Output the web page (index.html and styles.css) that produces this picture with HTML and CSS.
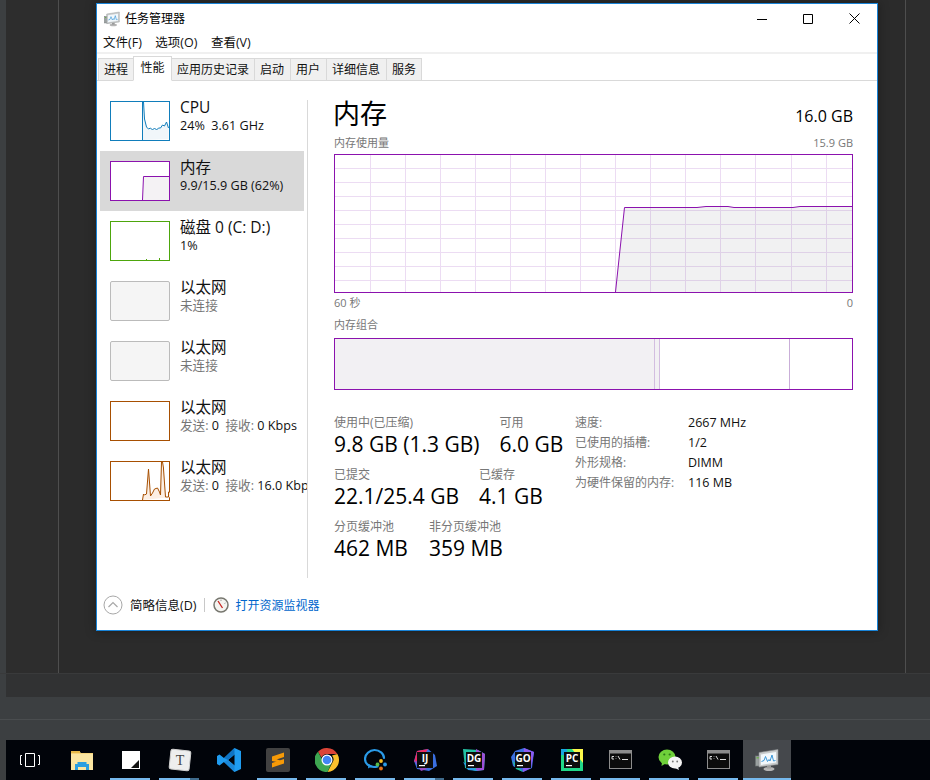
FILE: index.html
```html
<!DOCTYPE html>
<html lang="zh-CN">
<head>
<meta charset="utf-8">
<title>任务管理器</title>
<link rel="stylesheet" href="styles.css">
</head>
<body>
<svg class="defs" width="0" height="0">
  <symbol id="tm" viewBox="0 0 24 24">
    <rect x="0.5" y="8" width="6" height="10" fill="#9aa0a0" stroke="#6f7575" stroke-width=".6"/>
    <rect x="1.5" y="9" width="2.5" height="1.5" fill="#6fb04e"/>
    <ellipse cx="14" cy="21" rx="5.5" ry="2" fill="#b5b5b5"/>
    <rect x="12" y="17" width="4" height="3.5" fill="#9c9c9c"/>
    <path d="M4 4.5 23 1.5v15L4 19z" fill="#c9cccd" stroke="#8b8f90" stroke-width=".6"/>
    <path d="M6 6.5 21 4v10.5L6 17z" fill="#f2f8fc"/>
    <path d="M6.5 13.5 9 12.5l1.5-4 2 5 1.500-2 1 1.500 2-6 1.500 6 2-.5" fill="none" stroke="#3b97d8" stroke-width="1"/>
  </symbol>
  <symbol id="cmd" viewBox="0 0 24 24">
    <rect x=".5" y="2.500" width="22" height="18" fill="#0c0c0c" stroke="#8c8c8c"/>
    <rect x="1" y="3" width="21" height="2.500" fill="#8c8c8c"/>
    <path d="M3 8.500h2M3 11h2M3 8.500v2.500M7 8.500v.5M7 10.500v.5M9 8l2 3.500M13 11.500h6" fill="none" stroke="#dcdcdc" stroke-width="1"/>
  </symbol>
</svg>
<div class="desktop">
  <div class="editor">
    <div class="edge"></div>
    <div class="gutter"></div>
    <div class="code"></div>
    <div class="rightcol"></div>
  </div>
  <div class="status"><div class="edge"></div></div>
  <div class="toolstrip"></div>
  <div class="taskbar">
    <div class="edge"></div>
    <div class="task task-first">
      <svg width="22" height="16" viewBox="0 0 22 16"><path d="M6.500 1.500h9v13h-9zM3 3.500H1.500v9H3M19 3.500h1.500v9H19" fill="none" stroke="#fff" stroke-width="1"/></svg>
    </div>
    <div class="task">
      <svg width="22" height="20" viewBox="0 0 22 20"><path d="M0 1h8l2 2h12v17H0z" fill="#f6d57c"/><path d="M0 4h22v16H0z" fill="#fbe6a2"/><path d="M0 1h9v2H0z" fill="#e7b948"/><path d="M4 20v-6h2.500v-2h9v2H18v6h-3v-3H7v3z" fill="#2b9fe0"/></svg>
    </div>
    <div class="task on">
      <svg width="18" height="18" viewBox="0 0 18 18"><path d="M0 0h18v18H0z" fill="#fff"/><path d="M17 9v8H9z" fill="#111"/></svg>
    </div>
    <div class="task on split">
      <svg width="24" height="24" viewBox="0 0 24 24"><rect x="2" y="2" width="20" height="20" rx="2" transform="rotate(6 12 12)" fill="#eeeeee" stroke="#cfcfcf"/><text x="12" y="17" text-anchor="middle" class="tt">T</text></svg>
    </div>
    <div class="task">
      <svg width="24" height="24" viewBox="0 0 24 24"><path d="M17.500 0 24 3v18l-6.500 3L7 14l-4.500 3.500L0 16V8l2.500-1.500L7 10zM17.500 6.500 11 12l6.500 5.500z" fill="#1f9cf0"/><path d="M17.500 0v6.500L11 12 7 10z" fill="#0f74c4"/><path d="M17.500 24v-6.500L11 12l-4 2z" fill="#1a87d8"/></svg>
    </div>
    <div class="task on">
      <svg width="24" height="24" viewBox="0 0 24 24"><rect width="24" height="24" rx="2" fill="#414141"/><path d="M6 8.500 18 4.500V9L6 13zM6 10 18 13.500v2L6 13zM6 15 18 11v4.500L6 19.500z" fill="#f79a07"/></svg>
    </div>
    <div class="task on">
      <svg width="24" height="24" viewBox="0 0 24 24"><path d="M12 0a12 12 0 0 1 10.400 6H12a6 6 0 0 0-5.500 3.500L3 3.700A12 12 0 0 1 12 0z" fill="#db4437"/><path d="M22.400 6A12 12 0 0 1 12.500 24l4.700-9A6 6 0 0 0 17 7.500z" fill="#fbc02d"/><path d="M12.500 24A12 12 0 0 1 3 3.700l4.800 9a6 6 0 0 0 8.700 2.500z" fill="#3da651"/><circle cx="12" cy="12" r="5.500" fill="#fff"/><circle cx="12" cy="12" r="4.300" fill="#4285f4"/></svg>
    </div>
    <div class="task on">
      <svg width="24" height="24" viewBox="0 0 24 24"><path d="M13.500 18.500c-1.100.4-2.300.5-3.500.5-5-.3-9-3.500-9-8S5.500 2 10.500 2s9.500 3.500 9.500 8" fill="none" stroke="#2a9be8" stroke-width="2.200" stroke-linecap="round"/><path d="M4.500 16l-.5 4.500 4.500-2.500z" fill="#2a9be8"/><circle cx="17" cy="13" r="1.900" fill="#f7c325"/><circle cx="21" cy="16.500" r="1.900" fill="#2a9be8"/><circle cx="17" cy="20.500" r="1.900" fill="#e8731a"/><circle cx="13.500" cy="16.500" r="1.900" fill="#58b947"/></svg>
    </div>
    <div class="task on split">
      <svg width="24" height="24" viewBox="0 0 24 24"><path d="M4 3 15 1l7 6 2 11-8 5-12-2-3-8z" fill="#3a6fe0"/><path d="M4 3 15 1 8 12 1 14z" fill="#ed2a66"/><path d="M1 12l7 11 6-2-9-7z" fill="#9a4bc0"/><rect x="4" y="4" width="16" height="16" fill="#0c0c0c"/><text x="12" y="14" text-anchor="middle" class="jb">IJ</text><path d="M6 17h6v1.200H6z" fill="#fff"/></svg>
    </div>
    <div class="task on">
      <svg width="24" height="24" viewBox="0 0 24 24"><path d="M1 1l15 1 7 4-1 16-8 1-11-3z" fill="#24c2a4"/><path d="M14 1l9 5-1 16-8 1z" fill="#9d4fd8"/><path d="M1 14l5 8 10 1-9-6z" fill="#2c9ae6"/><rect x="4" y="4" width="16" height="16" fill="#0c0c0c"/><text x="12" y="14" text-anchor="middle" class="jb">DG</text><path d="M6 17h6v1.200H6z" fill="#fff"/></svg>
    </div>
    <div class="task on">
      <svg width="24" height="24" viewBox="0 0 24 24"><path d="M4 3l9-3 10 4-2 16-9 4-10-6-2-9z" fill="#3a6fe0"/><path d="M13 0l10 4-3 16-8 4z" fill="#8d5af0"/><path d="M1 12l4 9 7 3z" fill="#1fc29a"/><rect x="4" y="4" width="16" height="16" fill="#0c0c0c"/><text x="12" y="14" text-anchor="middle" class="jb">GO</text><path d="M6 17h6v1.200H6z" fill="#fff"/></svg>
    </div>
    <div class="task on">
      <svg width="24" height="24" viewBox="0 0 24 24"><path d="M1 1h22v22H1z" fill="#21d789"/><path d="M12 1h11v14z" fill="#fcf84a"/><path d="M1 1h6v6H1z" fill="#18a8e0"/><rect x="4" y="4" width="16" height="16" fill="#0c0c0c"/><text x="12" y="14" text-anchor="middle" class="jb">PC</text><path d="M6 17h6v1.200H6z" fill="#fff"/></svg>
    </div>
    <div class="task on"><svg width="24" height="24"><use href="#cmd"/></svg></div>
    <div class="task on">
      <svg width="24" height="22" viewBox="0 0 24 22"><ellipse cx="9" cy="8" rx="8.500" ry="7.500" fill="#6fd03a"/><path d="M4 13l-.5 4 4-2.500z" fill="#6fd03a"/><circle cx="6.300" cy="5.500" r="1.100" fill="#2c7a17"/><circle cx="11.700" cy="5.500" r="1.100" fill="#2c7a17"/><ellipse cx="17" cy="13.500" rx="7" ry="6" fill="#f4f4f4"/><path d="M20 18l1 3-4-2z" fill="#f4f4f4"/><circle cx="14.800" cy="12.500" r=".9" fill="#777"/><circle cx="19.200" cy="12.500" r=".9" fill="#777"/></svg>
    </div>
    <div class="task on"><svg width="24" height="24"><use href="#cmd"/></svg></div>
    <div class="task on active"><svg width="24" height="24"><use href="#tm"/></svg></div>
  </div>
</div>

<div class="window">
  <div class="titlebar">
    <svg class="appicon" width="16" height="16"><use href="#tm"/></svg>
    <span class="apptitle">任务管理器</span>
    <div class="controls">
      <div class="ctl"><svg width="10" height="10" viewBox="0 0 10 10"><path d="M0 5.500h10" stroke="#000" fill="none"/></svg></div>
      <div class="ctl"><svg width="10" height="10" viewBox="0 0 10 10"><path d="M.5.500h9v9h-9z" stroke="#000" fill="none"/></svg></div>
      <div class="ctl"><svg width="11" height="11" viewBox="0 0 11 11"><path d="M.5.500l10 10M10.500.500l-10 10" stroke="#000" fill="none"/></svg></div>
    </div>
  </div>
  <div class="menubar"><span>文件(F)</span><span>选项(O)</span><span>查看(V)</span></div>
  <div class="tabs">
    <div class="tab">进程</div>
    <div class="tab tab-on">性能</div>
    <div class="tab">应用历史记录</div>
    <div class="tab tab-w">启动</div>
    <div class="tab tab-w">用户</div>
    <div class="tab tab-w">详细信息</div>
    <div class="tab">服务</div>
  </div>
  <div class="perf">
    <div class="sidebar">
      <div class="item">
        <svg class="thumb" width="60" height="40" viewBox="0 0 60 40"><rect x=".5" y=".5" width="59" height="39" fill="#fff" stroke="#117dbb"/><path d="M32.500 39V1h1l1 17 2 8 2 2 2-1 2 2 2-2 2 2 2-2 2 0 2-3 2 1 2-4 2 6v11z" fill="#f1f6fa"/><path d="M32.500 39V1h1l1 17 2 8 2 2 2-1 2 2 2-2 2 2 2-2 2 0 2-3 2 1 2-4 2 6" fill="none" stroke="#117dbb"/></svg>
        <div class="itext"><div class="iname">CPU</div><div class="isub dark">24%&nbsp; 3.61 GHz</div></div>
      </div>
      <div class="item selected">
        <svg class="thumb" width="60" height="40" viewBox="0 0 60 40"><rect x=".5" y=".5" width="59" height="39" fill="#fff" stroke="#8b12ae"/><path d="M32.500 39l1-23.500H59V39z" fill="#f4f2f4"/><path d="M32.500 39l1-23.500H59" fill="none" stroke="#8b12ae"/></svg>
        <div class="itext"><div class="iname">内存</div><div class="isub dark">9.9/15.9 GB (62%)</div></div>
      </div>
      <div class="item">
        <svg class="thumb" width="60" height="40" viewBox="0 0 60 40"><rect x=".5" y=".5" width="59" height="39" fill="#fff" stroke="#4da60c"/><path d="M36.500 39v-1M49.500 39v-2" stroke="#4da60c" fill="none"/></svg>
        <div class="itext"><div class="iname">磁盘 0 (C: D:)</div><div class="isub dark">1%</div></div>
      </div>
      <div class="item">
        <div class="thumb-off"></div>
        <div class="itext"><div class="iname">以太网</div><div class="isub">未连接</div></div>
      </div>
      <div class="item">
        <div class="thumb-off"></div>
        <div class="itext"><div class="iname">以太网</div><div class="isub">未连接</div></div>
      </div>
      <div class="item">
        <svg class="thumb" width="60" height="40" viewBox="0 0 60 40"><rect x=".5" y=".5" width="59" height="39" fill="#fff" stroke="#a74f01"/></svg>
        <div class="itext"><div class="iname">以太网</div><div class="isub">发送: <span class="dark">0</span>&nbsp; 接收: <span class="dark">0 Kbps</span></div></div>
      </div>
      <div class="item">
        <svg class="thumb" width="60" height="40" viewBox="0 0 60 40"><rect x=".5" y=".5" width="59" height="39" fill="#fff" stroke="#a74f01"/><path d="M32.500 39l1-6 1 1 2-1 2-25 2 27 2-3 2-4 3-1 2 4 1 3 1-33h1l1 6v1l2 28h3v-5h5v5z" fill="#fcefe4"/><path d="M32.500 39l1-6 1 1 2-1 2-25 2 27 2-3 2-4 3-1 2 4 1 3 1-33h1l1 6v1l2 28h3v-5h5" fill="none" stroke="#a74f01"/></svg>
        <div class="itext"><div class="iname">以太网</div><div class="isub">发送: <span class="dark">0</span>&nbsp; 接收: <span class="dark">16.0 Kbps</span></div></div>
      </div>
    </div>
    <div class="vdiv"></div>
    <div class="main">
      <div class="head"><span class="h-title">内存</span><span class="h-cap">16.0 GB</span></div>
      <div class="cap"><span>内存使用量</span><span>15.9 GB</span></div>
      <svg class="chart" width="519" height="139" viewBox="0 0 519 139">
        <path d="M36.500 0V139M71.500 0V139M106.500 0V139M141.500 0V139M176.500 0V139M211.500 0V139M246.500 0V139M281.500 0V139M316.500 0V139M351.500 0V139M386.500 0V139M421.500 0V139M457.500 0V139M492.500 0V139M0 14.500H519M0 28.500H519M0 42.500H519M0 56.500H519M0 70.500H519M0 84.500H519M0 98.500H519M0 112.500H519M0 126.500H519" fill="none" stroke="#ecdcf3"/>
        <path d="M281.500 138 290.500 53.500H363L372 52.500H394L400 53.500H459L466 52.500H518V138z" fill="#5f5f70" fill-opacity=".09"/>
        <path d="M281.500 138 290.500 53.500H363L372 52.500H394L400 53.500H459L466 52.500H518" fill="none" stroke="#8b12ae"/>
        <rect x=".5" y=".5" width="518" height="138" fill="none" stroke="#8b12ae"/>
      </svg>
      <div class="cap cap-below"><span>60 秒</span><span>0</span></div>
      <div class="cap cap-comp"><span>内存组合</span></div>
      <div class="comp">
        <div class="seg seg-used"></div>
        <div class="seg seg-mod"></div>
        <div class="seg seg-standby"></div>
        <div class="seg seg-free"></div>
      </div>
      <div class="stats">
        <div class="stats-left">
          <div class="srow">
            <div class="stat"><div class="slabel">使用中(已压缩)</div><div class="sval">9.8 GB (1.3 GB)</div></div>
            <div class="stat"><div class="slabel">可用</div><div class="sval">6.0 GB</div></div>
          </div>
          <div class="srow">
            <div class="stat"><div class="slabel">已提交</div><div class="sval">22.1/25.4 GB</div></div>
            <div class="stat"><div class="slabel">已缓存</div><div class="sval">4.1 GB</div></div>
          </div>
          <div class="srow">
            <div class="stat stat-w"><div class="slabel">分页缓冲池</div><div class="sval">462 MB</div></div>
            <div class="stat"><div class="slabel">非分页缓冲池</div><div class="sval">359 MB</div></div>
          </div>
        </div>
        <div class="props">
          <span class="pk">速度:</span><span class="pv">2667 MHz</span>
          <span class="pk">已使用的插槽:</span><span class="pv">1/2</span>
          <span class="pk">外形规格:</span><span class="pv">DIMM</span>
          <span class="pk">为硬件保留的内存:</span><span class="pv">116 MB</span>
        </div>
      </div>
    </div>
  </div>
  <div class="footer">
    <svg class="fold" width="20" height="20" viewBox="0 0 20 20"><circle cx="10" cy="10" r="9" fill="none" stroke="#a8a8a8"/><path d="M5.500 12 10 7.500l4.500 4.500" fill="none" stroke="#a8a8a8" stroke-width="1.200"/></svg>
    <span class="fless">简略信息(D)</span>
    <span class="fsep"></span>
    <svg class="gauge" width="16" height="16" viewBox="0 0 16 16"><circle cx="8" cy="8" r="7" fill="#f4f4f0" stroke="#77776f" stroke-width="1.500"/><path d="M5 4l4.500 7" stroke="#c8221e" stroke-width="1.300"/><path d="M8 2.500v1.500M12.500 6l-1 .5" stroke="#999"/></svg>
    <span class="flink">打开资源监视器</span>
  </div>
</div>
</body>
</html>
```

FILE: styles.css
```css
* { box-sizing: border-box; }
html, body { margin: 0; padding: 0; }
body {
  width: 930px;
  height: 780px;
  overflow: hidden;
  position: relative;
  background: #2b2b2b;
  font-family: "Open Sans", "Noto Sans CJK SC", sans-serif;
  font-size: 12px;
  color: #000;
}
.defs { position: absolute; }

/* backdrop */
.desktop { display: flex; flex-direction: column; height: 780px; }
.editor { display: flex; height: 673px; background: #2b2b2b; }
.edge { width: 6px; flex: none; background: #3c3f41; }
.gutter { width: 53px; flex: none; background: #2d2d2d; border-right: 1px solid #4e4e4e; }
.code { flex: 1; background: #2b2b2b; }
.rightcol { width: 25px; flex: none; background: #2d2d2d; border-left: 1px solid #4e4e4e; }
.status { display: flex; height: 24px; background: #313233; border-top: 1px solid #393a3b; }
.toolstrip { height: 43px; background: #3c3f41; display: flex; flex-direction: column; }
.toolstrip::after { content: ""; margin-top: 22px; height: 1px; background: #4a4d4f; }

/* taskbar */
.taskbar { display: flex; height: 40px; background: #01040a; }
.task { width: 49px; flex: none; height: 40px; display: flex; align-items: center; justify-content: center; position: relative; }
.task-first { width: 51px; padding-right: 3px; }
.task.on::after { content: ""; position: absolute; left: 4px; width: 40px; bottom: 0; height: 2px; background: #76b9ed; }
.task.split::before { content: ""; position: absolute; left: 35px; width: 9px; bottom: 0; height: 2px; background: #3f6b8c; z-index: 1; }
.task.active { width: 48px; background: #45484c; }
.task.active::after { left: 0; width: 48px; }
.tt { font: 14px "Liberation Serif", serif; fill: #444; }
.jb { font: 700 10px "Open Sans", sans-serif; fill: #fff; }

/* window */
.window {
  position: absolute;
  left: 96px;
  top: 3px;
  width: 782px;
  height: 628px;
  background: #fff;
  border: 1px solid #1883d7;
  box-shadow: 0 0 10px rgba(0, 0, 0, .35);
  display: flex;
  flex-direction: column;
}
.titlebar { height: 29px; display: flex; align-items: center; padding-left: 7px; flex: none; }
.appicon { flex: none; }
.apptitle { margin-left: 5px; line-height: 16px; }
.controls { margin-left: auto; display: flex; }
.ctl { width: 46px; height: 29px; display: flex; align-items: center; justify-content: center; }
.menubar { height: 19px; flex: none; display: flex; gap: 13.500px; padding-left: 6px; font-size: 12.500px; line-height: 19px; color: #111; }
.tabs { height: 29px; flex: none; display: flex; align-items: flex-end; padding-left: 1px; border-top: 2px solid #f0f0f0; border-bottom: 1px solid #d9d9d9; }
.tab { height: 23px; margin-bottom: -1px; margin-right: -1px; padding: 0 5px; background: #f0f0f0; border: 1px solid #d9d9d9; line-height: 21px; white-space: nowrap; color: #111; }
.tab-w { padding: 0 6px 0 5px; }
.tab-on { height: 25px; padding: 0 6.500px; background: #fff; border-bottom-color: #fff; position: relative; z-index: 1; line-height: 22px; }

.perf { flex: 1; display: flex; min-height: 0; padding-top: 10px; }
.sidebar { width: 207px; margin-left: 3px; padding-right: 3px; overflow: hidden; flex: none; height: 480px; }
.item { height: 60px; width: 204px; padding: 10px 0 0 10px; display: flex; white-space: nowrap; }
.selected { background: #d9d9d9; }
.thumb { flex: none; display: block; }
.thumb-off { width: 60px; height: 40px; flex: none; background: #f5f5f5; border: 1px solid #bbb; border-radius: 2px; }
.itext { margin-left: 10px; }
.iname { font-size: 15.500px; line-height: 20px; margin-top: -4px; color: #111; }
.isub { font-size: 12.600px; line-height: 18px; color: #777; }
.dark { color: #111; }
.vdiv { width: 1px; height: 478px; margin-top: 9px; background: #d9d9d9; flex: none; }
.main { width: 519px; margin-left: 26px; flex: none; display: flex; flex-direction: column; }
.head { display: flex; justify-content: space-between; align-items: flex-end; height: 45px; }
.h-title { font-size: 27px; line-height: 44px; margin-left: -1px; }
.h-cap { font-size: 16px; line-height: 24px; margin-bottom: 8px; }
.cap { display: flex; justify-content: space-between; font-size: 11px; line-height: 14px; color: #777; }
.chart { display: block; margin-top: 4px; flex: none; }
.cap-below { margin-top: 3px; }
.cap-comp { margin-top: 8px; }
.comp { display: flex; height: 52px; margin-top: 6px; border: 1px solid #8b12ae; flex: none; }
.seg { height: 100%; }
.seg-used { width: 319px; background: #f2f0f3; }
.seg-mod { width: 6px; background: #f2f0f3; border-left: 1px solid #d3bde0; border-right: 1px solid #d3bde0; }
.seg-standby { width: 130px; border-right: 1px solid #c9aed8; }
.seg-free { flex: 1; }
.stats { display: flex; margin-top: 25px; }
.stats-left { width: 241px; flex: none; display: flex; flex-direction: column; gap: 9px; }
.srow { display: flex; gap: 20px; }
.stat-w { min-width: 75px; }
.slabel { color: #777; line-height: 16px; white-space: nowrap; }
.sval { font-size: 21px; line-height: 28px; margin-top: -1px; white-space: nowrap; }
.props { display: grid; grid-template-columns: 113px auto; grid-auto-rows: 20px; line-height: 16px; align-content: start; }
.pk { color: #777; white-space: nowrap; }
.pv { color: #111; font-size: 12.500px; }

.footer { height: 40px; flex: none; display: flex; align-items: center; padding: 0 0 10px 6px; }
.fold { flex: none; }
.fless { margin: 0 0 2px 7px; color: #111; font-size: 12.500px; }
.fsep { width: 1px; height: 14px; background: #c8c8c8; margin-left: 8px; }
.gauge { margin-left: 8px; flex: none; }
.flink { margin-left: 6px; color: #0066cc; }
```
